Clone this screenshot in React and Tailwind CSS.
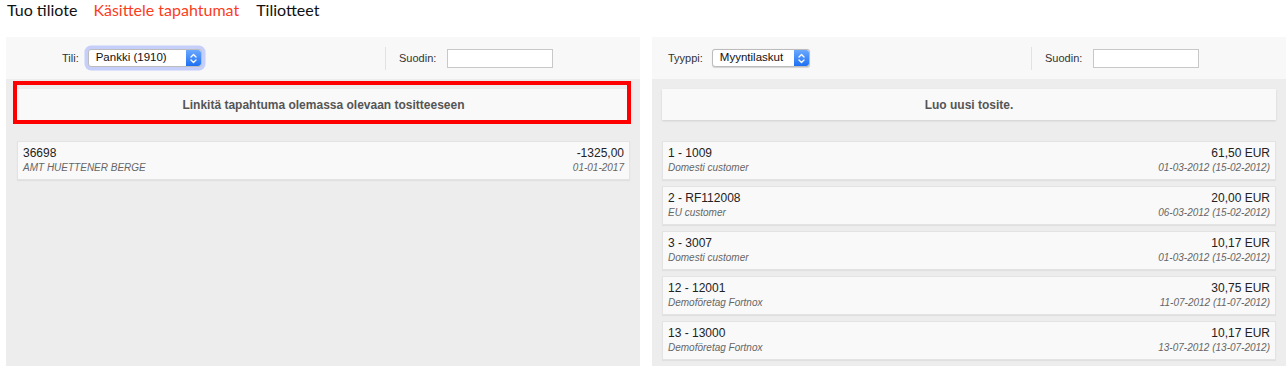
import React from "react";

function Stepper() {
  return (
    <div className="absolute right-0 top-0 bottom-0 w-[15px] rounded-r-[3px] bg-gradient-to-b from-[#6aa8ff] to-[#1b6ff2] flex items-center justify-center">
      <svg width="7" height="11" viewBox="0 0 7 11" fill="none">
        <path d="M1 4 L3.5 1.5 L6 4" stroke="white" strokeWidth="1.3" strokeLinecap="round" strokeLinejoin="round" />
        <path d="M1 7 L3.5 9.5 L6 7" stroke="white" strokeWidth="1.3" strokeLinecap="round" strokeLinejoin="round" />
      </svg>
    </div>
  );
}

function Select({ value, width, focused }) {
  return (
    <div
      className={
        "relative h-[18px] rounded-[3px] border border-[#bcbcbc] bg-white flex items-center pl-[7px] text-[11.5px] text-[#111] leading-none " +
        (focused ? "shadow-[0_0_0_3.5px_#c6cefa]" : "shadow-[0_0.5px_1px_rgba(0,0,0,0.15)]")
      }
      style={{ width }}
    >
      <span>{value}</span>
      <Stepper />
    </div>
  );
}

function Toolbar({ label, value, selectWidth, focused, pl }) {
  return (
    <div className="h-[42px] bg-[#f8f8f8] flex items-center text-[11px] text-[#333]">
      <div className="w-[379px] flex items-center" style={{ paddingLeft: pl }}>
        <span className="mr-[9px]">{label}</span>
        <Select value={value} width={selectWidth} focused={focused} />
      </div>
      <div className="w-px h-[23px] bg-[#e2e2e2]" />
      <span className="ml-[13px]">Suodin:</span>
      <div className="ml-[11px] w-[106px] h-[19px] border border-[#c8c8c8] bg-white" />
    </div>
  );
}

function Card({ title, sub, amount, date }) {
  return (
    <div className="h-[39px] bg-[#f9f9f9] border border-[#e3e3e3] shadow-[0_1px_1px_rgba(0,0,0,0.05)] pl-[5px] pr-[5px] pt-[4px] flex justify-between">
      <div>
        <div className="text-[12px] leading-[15px] text-[#222]">{title}</div>
        <div className="text-[10px] leading-[13px] italic text-[#666]">{sub}</div>
      </div>
      <div className="text-right">
        <div className="text-[12px] leading-[15px] text-[#222]">{amount}</div>
        <div className="text-[10px] leading-[13px] italic text-[#666]">{date}</div>
      </div>
    </div>
  );
}

function ActionButton({ children }) {
  return (
    <div className="h-[31px] bg-[#f9f9f9] shadow-[0_1px_2px_rgba(0,0,0,0.12)] flex items-center justify-center text-[12px] font-bold text-[#555]">
      {children}
    </div>
  );
}

const rightItems = [
  ["1 - 1009", "Domesti customer", "61,50 EUR", "01-03-2012 (15-02-2012)"],
  ["2 - RF112008", "EU customer", "20,00 EUR", "06-03-2012 (15-02-2012)"],
  ["3 - 3007", "Domesti customer", "10,17 EUR", "01-03-2012 (15-02-2012)"],
  ["12 - 12001", "Demoföretag Fortnox", "30,75 EUR", "11-07-2012 (11-07-2012)"],
  ["13 - 13000", "Demoföretag Fortnox", "10,17 EUR", "13-07-2012 (13-07-2012)"],
];

export default function App() {
  return (
    <div
      className="w-[1288px] h-[366px] bg-white overflow-hidden"
      style={{ fontFamily: '"Liberation Sans", Arial, sans-serif' }}
    >
      <nav
        className="h-[37px] flex items-start pl-[7px] text-[16px] leading-[20px]"
        style={{ fontFamily: 'Lato, "Noto Sans", sans-serif' }}
      >
        <span className="text-[#111]">Tuo tiliote</span>
        <span className="ml-[16px] text-[#fc3d21]">Käsittele tapahtumat</span>
        <span className="ml-[17px] text-[#111]">Tiliotteet</span>
      </nav>
      <div className="flex pl-[6px] gap-[12px] h-[329px]">
        <div className="w-[634px] flex flex-col">
          <Toolbar label="Tili:" value="Pankki (1910)" selectWidth={114} focused pl={56} />
          <div className="flex-1 bg-[#ededed] pl-[11px] pr-[10px] pt-[10px]">
            <div className="relative">
              <ActionButton>Linkitä tapahtuma olemassa olevaan tositteeseen</ActionButton>
              <div className="absolute left-[-4px] right-[-1px] top-[-8px] bottom-[-4px] border-[4px] border-[#ff0000] pointer-events-none" />
            </div>
            <div className="mt-[21px]">
              <Card title="36698" sub="AMT HUETTENER BERGE" amount="-1325,00" date="01-01-2017" />
            </div>
          </div>
        </div>
        <div className="w-[634px] flex flex-col">
          <Toolbar label="Tyyppi:" value="Myyntilaskut" selectWidth={98} pl={16} />
          <div className="flex-1 bg-[#ededed] px-[10px] pt-[10px]">
            <ActionButton>Luo uusi tosite.</ActionButton>
            <div className="mt-[21px] flex flex-col gap-[6px]">
              {rightItems.map((it) => (
                <Card key={it[0]} title={it[0]} sub={it[1]} amount={it[2]} date={it[3]} />
              ))}
            </div>
          </div>
        </div>
      </div>
    </div>
  );
}
